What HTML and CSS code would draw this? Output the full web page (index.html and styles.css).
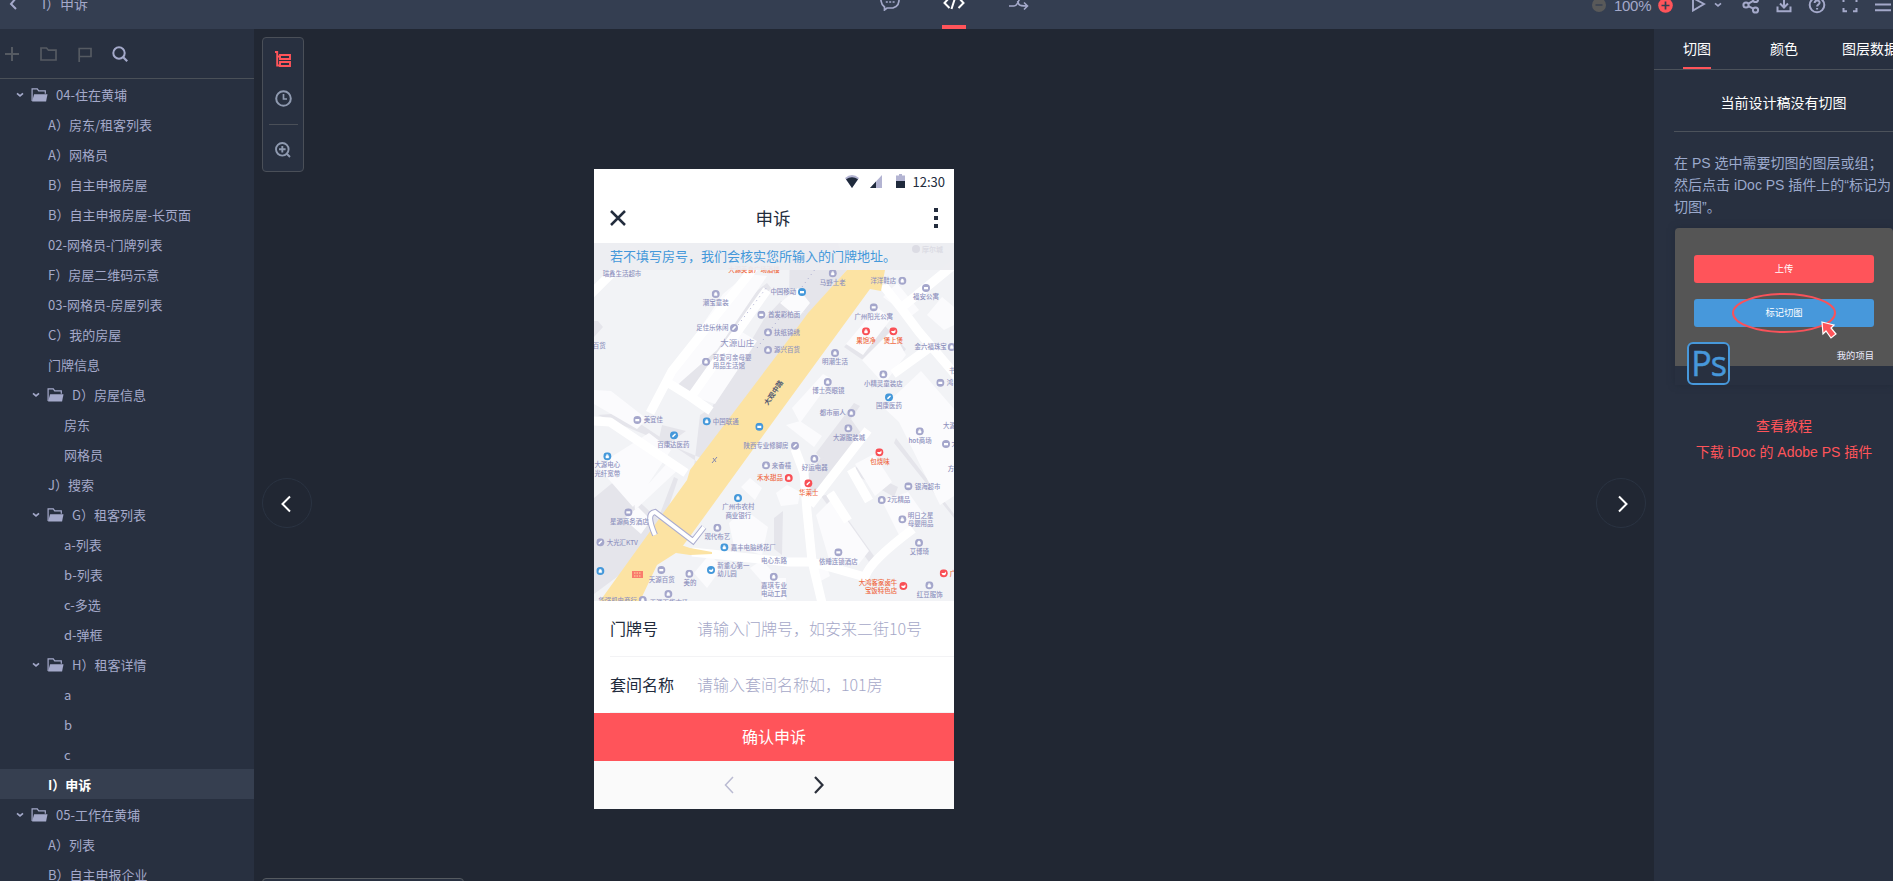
FILE: index.html
```html
<!DOCTYPE html>
<html lang="zh-CN">
<head>
<meta charset="utf-8">
<title>申诉</title>
<link rel="stylesheet" href="styles.css">
</head>
<body>
<svg class="defs" width="0" height="0">
  <symbol id="folder" viewBox="0 0 16 14"><path d="M.6 13V.8h5.2l1.4 2h6.600v3" fill="none" stroke="currentColor" stroke-width="1.2"/><path d="M2.600 6.200H16L14.600 13.400H.6z" fill="currentColor"/></symbol>
  <symbol id="caret" viewBox="0 0 8 6"><path d="M1 1.300l3 2.500 3-2.500" fill="none" stroke="currentColor" stroke-width="1.700"/></symbol>
  <symbol id="poi"><circle cx="4" cy="4" r="4"/><path d="M2.600 3.600h2.800v2H2.600zM3.200 3.500V2.400h1.600v1.100" fill="#fff" stroke="#fff" stroke-width=".5"/></symbol>
  <symbol id="bed"><circle cx="4" cy="4" r="4"/><path d="M2 3h4v2.300H2z" fill="#fff"/></symbol>
  <symbol id="pill"><circle cx="4" cy="4" r="4"/><path d="M2.900 5.100l2.200-2.200" stroke="#fff" stroke-width="1.500" stroke-linecap="round"/></symbol>
  <symbol id="food"><circle cx="4" cy="4" r="4"/><path d="M1.800 3.800h3L6 2.300l.3 1.600C6 6.800 2.200 6.800 1.800 3.800z" fill="#fff"/></symbol>
</svg>
<header class="topbar">
  <div class="crumb">
    <svg width="9" height="16" viewBox="0 0 9 16"><path d="M7 2L2 8l5 5" fill="none" stroke="currentColor" stroke-width="2"/></svg>
    <span>I）申诉</span>
  </div>
  <nav class="modes">
    <svg width="20" height="20" viewBox="0 0 20 20"><path d="M4.500 16C.5 13-.2 7 3 4s11-3.500 14 0 2.500 9-1 11.500L13 17H7l-2.500 2z" fill="none" stroke="currentColor" stroke-width="1.700"/><path d="M5.800 11h2M9.200 11h2M12.600 11h2" stroke="currentColor" stroke-width="1.500"/></svg>
    <span class="mode-on"><svg width="24" height="20" viewBox="0 0 24 20"><path d="M7.500 5.500L2.500 11l5 5M16.500 5.500l5 5.500-5 5M14 3l-4.500 14" fill="none" stroke="currentColor" stroke-width="2"/></svg></span>
    <svg width="22" height="20" viewBox="0 0 22 20"><path d="M1 15h5c5 0 4-9.500 9-9.500h4M9.500 10l1.500 3.500c1 1.500 3 1.500 8 1.500M16 11.500l3.500 3.500-3.500 3.500M1 5.500h4l3 2" fill="none" stroke="currentColor" stroke-width="1.600"/></svg>
  </nav>
  <div class="tools">
    <svg class="minus" width="14" height="14" viewBox="0 0 14 14"><circle cx="7" cy="7" r="7" fill="#595959"/><path d="M3.500 7h7" stroke="#343e51" stroke-width="1.400"/></svg>
    <span class="pct">100%</span>
    <svg class="plus" width="15" height="15" viewBox="0 0 15 15"><circle cx="7.500" cy="7.500" r="7.300" fill="#ff545a"/><path d="M3.500 7.500h8M7.500 3.500v8" stroke="#343e51" stroke-width="1.700"/></svg>
    <svg class="play" width="15" height="16" viewBox="0 0 15 16"><path d="M2 2l11 6-11 6.500z" fill="none" stroke="currentColor" stroke-width="1.900"/></svg>
    <svg class="tri" width="8" height="6"><use href="#caret"/></svg>
    <svg class="ic" width="18" height="18" viewBox="0 0 18 18"><circle cx="4" cy="9" r="2.600"/><circle cx="13.500" cy="3.500" r="2.600"/><circle cx="13.500" cy="14" r="2.600"/><path d="M6.400 10.200l4.800 2.500M6.400 7.700l4.800-2.800"/></svg>
    <svg class="ic" width="18" height="18" viewBox="0 0 18 18"><path d="M9 1v10M5 7.500l4 4 4-4M2.500 10.500v4.800h13v-4.800"/></svg>
    <svg class="ic" width="18" height="18" viewBox="0 0 18 18"><circle cx="9" cy="9" r="7.300"/><path d="M6.600 7c0-3.200 5-3.200 5-.3 0 1.800-2.500 1.800-2.500 3.800M9.100 12v1.600"/></svg>
    <svg class="ic" width="18" height="18" viewBox="0 0 18 18"><path d="M6 2.800H2.500V6M12 2.800h3.500V6M6 15.200H2.500V12M12 15.200h3.500V12"/></svg>
    <svg class="ic" width="18" height="18" viewBox="0 0 18 18"><path d="M1 3h16M1 8.500h16M1 14.200h16"/></svg>
  </div>
</header>
<div class="main">
  <aside class="side">
    <div class="side-tools">
      <svg width="14" height="14" viewBox="0 0 14 14"><path d="M0 7h14M7 0v14" stroke="#555a62" stroke-width="2"/></svg>
      <svg width="17" height="14" viewBox="0 0 17 14"><path d="M1 13V1h5.500l2 2.200H16V13z" fill="none" stroke="#555a62" stroke-width="1.700"/></svg>
      <svg width="14" height="15" viewBox="0 0 14 15"><path d="M1.200 15V1.500H13v8H2" fill="none" stroke="#555a62" stroke-width="1.700"/></svg>
      <svg width="16" height="16" viewBox="0 0 16 16"><circle cx="7" cy="7" r="5.700" fill="none" stroke="#a4a9ca" stroke-width="2"/><path d="M11 11l4.200 4.200" stroke="#a4a9ca" stroke-width="2.200"/></svg>
    </div>
    <ul class="tree">
      <li class="dir"><svg class="car"><use href="#caret"/></svg><svg class="fo"><use href="#folder"/></svg>04-住在黄埔</li>
      <li class="l1">A）房东/租客列表</li>
      <li class="l1">A）网格员</li>
      <li class="l1">B）自主申报房屋</li>
      <li class="l1">B）自主申报房屋-长页面</li>
      <li class="l1">02-网格员-门牌列表</li>
      <li class="l1">F）房屋二维码示意</li>
      <li class="l1">03-网格员-房屋列表</li>
      <li class="l1">C）我的房屋</li>
      <li class="l1">门牌信息</li>
      <li class="dir sub"><svg class="car"><use href="#caret"/></svg><svg class="fo"><use href="#folder"/></svg>D）房屋信息</li>
      <li class="l2">房东</li>
      <li class="l2">网格员</li>
      <li class="l1">J）搜索</li>
      <li class="dir sub"><svg class="car"><use href="#caret"/></svg><svg class="fo"><use href="#folder"/></svg>G）租客列表</li>
      <li class="l2">a-列表</li>
      <li class="l2">b-列表</li>
      <li class="l2">c-多选</li>
      <li class="l2">d-弹框</li>
      <li class="dir sub"><svg class="car"><use href="#caret"/></svg><svg class="fo"><use href="#folder"/></svg>H）租客详情</li>
      <li class="l2">a</li>
      <li class="l2">b</li>
      <li class="l2">c</li>
      <li class="l1 on">I）申诉</li>
      <li class="dir"><svg class="car"><use href="#caret"/></svg><svg class="fo"><use href="#folder"/></svg>05-工作在黄埔</li>
      <li class="l1">A）列表</li>
      <li class="l1">B）自主申报企业</li>
    </ul>
  </aside>
  <main class="canvas">
    <div class="toolbox">
      <svg width="16" height="17" viewBox="0 0 16 17"><path d="M0 1h2.200v13.500H5M2.200 5.500H5M5 4h10v4H5zM5 11h10v4H5z" fill="none" stroke="#ff545a" stroke-width="1.900"/></svg>
      <svg width="17" height="17" viewBox="0 0 17 17"><circle cx="8.500" cy="8.500" r="7.300" fill="none" stroke="#8f9ab0" stroke-width="2"/><path d="M8.500 4v5H12" fill="none" stroke="#8f9ab0" stroke-width="1.700"/></svg>
      <hr>
      <svg width="16" height="16" viewBox="0 0 16 16"><circle cx="7.300" cy="7.300" r="6.300" fill="none" stroke="#8f9ab0" stroke-width="1.900"/><path d="M4 7.300h6.600M7.300 4v6.600M11.500 11.500l3.500 3.500" stroke="#8f9ab0" stroke-width="1.900"/></svg>
    </div>
    <button class="round prev"><svg width="12" height="18" viewBox="0 0 12 18"><path d="M10 1.500L2.500 9l7.500 7.500" fill="none" stroke="#fff" stroke-width="2"/></svg></button>
    <button class="round next"><svg width="12" height="18" viewBox="0 0 12 18"><path d="M2 1.500L9.500 9 2 16.500" fill="none" stroke="#fff" stroke-width="2"/></svg></button>
    <div class="drawer"></div>
    <section class="phone">
      <div class="status">
        <svg width="14" height="13" viewBox="0 0 14 13"><path d="M0 3Q7-3 14 3L7 13z" fill="#b3b4d2"/><path d="M1 4.200Q7 .5 13 4.200L7 13z" fill="#1f2a3c"/></svg>
        <svg width="12" height="13" viewBox="0 0 12 13"><path d="M12 0v13H0z" fill="#b3b4d2"/><path d="M6 6.500V13H0z" fill="#1f2a3c"/></svg>
        <svg width="9" height="14" viewBox="0 0 9 14"><path d="M3 0h3v1.500h3V14H0V1.500h3z" fill="#b3b4d2"/><path d="M0 7h9v7H0z" fill="#1f2a3c"/></svg>
        <span>12:30</span>
      </div>
      <div class="titlebar">
        <svg width="18" height="18" viewBox="0 0 18 18"><path d="M2 2l14 14M16 2L2 16" stroke="#232c3d" stroke-width="2.500"/></svg>
        <b>申诉</b>
        <svg width="4" height="20" viewBox="0 0 4 20"><path d="M0 0h4v4H0zM0 8h4v4H0zM0 16h4v4H0z" fill="#232c3d"/></svg>
      </div>
      <div class="map">
        <svg width="360" height="358" viewBox="0 0 360 358">
          <path fill="#f2f3f6" d="M0 0h360v358H0z"/>
          <g fill="#e5e5eb">
            <path d="M164 47l9-7 4 5-57 80-20 29-18-9 36-50zM196 0h48l9 27-40 45-18-14zM170 76l17-18 27 14-70 100-26-8zM4 78l5 6-9 10V78z"/>
            <path d="M106 172l30-18 12 16-34 60-14-6zM4 172l26-2 90 60 4-8M68 182l24 6-30 22zM0 255l22-18 43 40-30 48-35 26zM209 238l48-62 14 20-51 60zM300 200l60 75v-4l-58-76zM262 224l42 20-4 10-38-22zM236 251l44 62-5 6-48-66z"/>
            <path d="M250 104l30-33 32 35-20 27zM180 275l9-7-1 44-8-6zM64 276l16-42 4 2-15 45zM222 210l38-50 6 3-38 54z"/>
          </g>
          <g fill="#fbfbfd">
            <path d="M129 51l24-20 20 2-50 74-42 37-6-12zM96 152l30-44 17-22 20 12-42 63zM186 60l18-15 12 15-12 15zM252 101l31-37 14 12-28 36zM268 117l30-30 14 25-22 29zM289 54l14-14 22 27-9 7zM333 72l15-18 12 10v18l-10 5z"/>
            <path d="M305 179l-16-15 38-36 33 38v87l-14 9zM261 221l19-10 18 28-17 14zM288 258l26-9 17 24-26 19zM222 272l16-16 37 52-11 14-27 1zM55 190l22 17-38 57-36-41zM40 257l36-40 10 8-45 42zM147 244l9-9 12 10-7 12zM135 280l15-14 24 18-6 28-28-9zM216 326l15-7 5 14-15 8zM168 335h24v22h-24z"/>
            <path d="M0 147l17 1 36 28-10 10-43-25zM182 250l11-8 13 7-2 12-17 2zM192 182l14-4 22 15-8 11zM198 165l31-34 9 5-32 44zM30 276l14-12 13 13-10 14zM100 330l15-18 14 11-16 22zM156 325l12-8 14 16-12 8z"/>
          </g>
          <g fill="none" stroke="#fff" stroke-width="9" stroke-linejoin="round">
            <path d="M-5 53L42 6M56 170l22-42L170 12M73 139l24 15 20 14M97 154l76-107M-2 178l18 1 76 51"/>
            <path d="M289 42l18 23 18 24 40 47M307 65l55-45M299 131l36-26M201 206l9 24 3 38 5 50 10 42M98 309l96 10h24l53 15q5-16 48-48M216 262l58-75M236 250l18 28M257 226l18 32"/>
          </g>
          <path fill="#fce3a3" d="M253 27h38l-4 21-11-2-92 126-87 120-12 16-22 14-17 36H6l87-121 3-10 90-119 28-38z"/>
          <path fill="#fce3a3" d="M84 301l12 4 22 4v2l-22 1-14-2z"/>
          <path d="M61 292c-6-14-7-22 0-23l38 29 11-14" fill="none" stroke="#abadd0" stroke-width="6"/>
          <path d="M61 292c-6-14-7-22 0-23l38 29 11-14" fill="none" stroke="#fff" stroke-width="4"/>
          <path d="M118 220l5-6M119 215l3 4" stroke="#8286ad"/>
          <path d="M144 82l29-38M163 105l30-40M208 44l14-19" stroke="#aaacd0" stroke-dasharray="1 4"/>
          <g fill="#a4a6cb">
            <use href="#poi" x="117.700" y="47"/><use href="#pill" x="136" y="81"/><use href="#poi" x="108" y="114.700"/><use href="#bed" x="39.300" y="173"/>
            <use href="#poi" x="234.700" y="26.300"/><use href="#poi" x="304.300" y="33.700"/><use href="#bed" x="328" y="41"/><use href="#bed" x="163.300" y="67.700"/><use href="#poi" x="170" y="85.300"/><use href="#poi" x="170" y="103"/><use href="#bed" x="275.700" y="60.300"/><use href="#poi" x="237" y="106"/><use href="#poi" x="353.700" y="100"/><use href="#poi" x="285.300" y="127.300"/><use href="#poi" x="229.700" y="135"/><use href="#poi" x="253.300" y="166"/><use href="#bed" x="342.300" y="135.700"/>
            <use href="#pill" x="197" y="198.700"/><use href="#poi" x="168" y="218.300"/><use href="#poi" x="119.300" y="280.700"/><use href="#bed" x="30.300" y="265.300"/><use href="#pill" x="2.300" y="295.300"/><use href="#bed" x="63.300" y="323"/><use href="#poi" x="91.300" y="326.700"/><use href="#poi" x="44.700" y="353"/><use href="#poi" x="70.300" y="347"/><use href="#poi" x="175.700" y="329.700"/>
            <use href="#poi" x="250.300" y="181.300"/><use href="#poi" x="321.700" y="184.300"/><use href="#bed" x="348" y="197"/><use href="#poi" x="216.300" y="211.700"/><use href="#bed" x="310.300" y="239.300"/><use href="#poi" x="283.700" y="253"/><use href="#poi" x="304.300" y="272.300"/><use href="#poi" x="321" y="295.700"/><use href="#bed" x="240.300" y="305.300"/><use href="#poi" x="331.300" y="338.300"/>
          </g>
          <g fill="#4498da">
            <use href="#bed" x="204" y="45"/><use href="#poi" x="108.700" y="174.300"/><use href="#pill" x="291" y="150.300"/><use href="#bed" x="161.300" y="179.700"/><use href="#pill" x="76" y="188.300"/><use href="#poi" x="9.300" y="209.300"/><use href="#poi" x="140" y="251"/><use href="#poi" x="126.300" y="300.300"/><use href="#food" x="113" y="323"/><use href="#poi" x="2.300" y="324"/>
          </g>
          <g fill="#f94f55">
            <use href="#poi" x="268" y="84.300"/><use href="#food" x="295.300" y="84.300"/><use href="#poi" x="190.700" y="231"/><use href="#food" x="281.300" y="205.300"/><use href="#pill" x="210.300" y="236.300"/><use href="#food" x="305.300" y="339"/><use href="#food" x="345.700" y="326.300"/>
            <path d="M38 328h11v7H38z" opacity=".7"/>
          </g>
          <path d="M40 330h7M40 333h7" stroke="#fce3a3" stroke-dasharray="1.500 1"/>
          <g class="lb mid">
            <text x="28" y="32.700">瑞鑫生活超市</text><text x="121.700" y="62.400">潮宝童装</text><text x="118.300" y="87.400">足佳乐休闲</text><text class="big" x="143.300" y="102.800">大源山庄</text><text x="5.300" y="105">百货</text><text x="131.700" y="181">中国联通</text><text x="59.300" y="179.400">美宜佳</text>
            <text x="238.700" y="41.700">马野土老</text><text x="289.300" y="40">洋洋鞋店</text><text x="332" y="56.400">福安公寓</text><text x="189.300" y="51.400">中国移动</text><text x="190" y="74">首发彩柏面</text><text x="193" y="91.700">扶纸锦绣</text><text x="193" y="109.400">源兴百货</text><text x="279.700" y="75.700">广州阳光公寓</text><text x="241" y="121.400">明潮生活</text><text x="336.700" y="106.400">金六福珠宝</text><text x="289.300" y="142.700">小精灵童装店</text><text x="234.300" y="150.400">博士亮眼镜</text><text x="295" y="165.400">国康医药</text><text x="238.700" y="172.400">都市丽人</text>
            <text x="79.300" y="203.700">百康达医药</text><text x="13.300" y="224.400">大源电心</text><text x="13.300" y="232.700">光纤宽带</text><text x="172" y="205">陕西专业修脚房</text><text x="187.500" y="224.700">来香禧</text><text x="144.300" y="266">广州市农村</text><text x="144.300" y="274.700">商业银行</text><text x="123.300" y="296.400">现代布艺</text><text x="35.300" y="280.700">星源商务酒店</text><text x="67.700" y="338.700">天源百货</text><text x="96" y="342">美的</text><text x="180" y="320">电心东路</text><text x="180" y="345">嘉琪专业</text><text x="180" y="353">电动工具</text><text x="75" y="362">天源百货市场</text>
            <text x="255" y="196.700">大源服装城</text><text x="326" y="200">hot商场</text><text x="220.700" y="227">好运电器</text><text x="325.300" y="311">艾博琦</text><text x="244.300" y="320.700">依睡连锁酒店</text><text x="335.700" y="353.700">红豆服饰</text>
          </g>
          <g class="lb">
            <text x="118.700" y="116.700">可爱可亲母婴</text><text x="118.700" y="124.700">用品生活馆</text><text x="12.700" y="301.700">大光汇KTV</text><text x="136.700" y="306.700">嘉丰电脑绣花厂</text><text x="123.300" y="325.400">新重心第一</text><text x="123.300" y="333.400">幼儿园</text><text x="4.300" y="359.500">华强机电商行</text>
            <text x="352.700" y="142">鸿</text><text x="355" y="130">书</text><text x="349" y="184.500">大源</text><text x="357.500" y="203">大</text><text x="353.700" y="227.700">方</text><text x="320.700" y="245.700">银海超市</text><text x="293.300" y="259.400">2元精品</text><text x="313.700" y="275">明日之星</text><text x="313.700" y="283">母婴用品</text>
          </g>
          <g class="lb hot mid">
            <text x="272" y="99.700">果饱净</text><text x="299.300" y="99.700">煲上煲</text><text x="176" y="237.400">禾水甜品</text><text x="286" y="221">包烧味</text><text x="214.700" y="252">华莱士</text><text x="284" y="342">大鸿客家卤牛</text><text x="287" y="350">宝饭特色店</text><text x="359" y="333">广</text>
            <text x="160" y="28.500">大源美食广场酒楼</text>
          </g>
          <text class="lb road" transform="translate(180 150) rotate(-56)" y="2">大观中路</text>
          <path fill="#ededf1" fill-opacity=".93" d="M0 0h360v27H0z"/>
          <g fill="#dcdce4"><circle cx="322" cy="6" r="4"/><text x="328" y="9" font-size="7" font-weight="bold">摩尔城</text></g>
        </svg>
        <p class="tip">若不填写房号，我们会核实您所输入的门牌地址。</p>
      </div>
      <div class="field"><label>门牌号</label><span>请输入门牌号，如安来二街10号</span></div>
      <div class="field"><label>套间名称</label><span>请输入套间名称如，101房</span></div>
      <div class="submit">确认申诉</div>
      <div class="pager">
        <svg width="10" height="18" viewBox="0 0 10 18"><path d="M9 1L1.500 9 9 17" fill="none" stroke="#babbd2" stroke-width="1.500"/></svg>
        <svg width="10" height="18" viewBox="0 0 10 18"><path d="M1 1l7.500 8L1 17" fill="none" stroke="#2b303b" stroke-width="2.200"/></svg>
      </div>
    </section>
  </main>
  <aside class="panel">
    <div class="tabs"><span class="cur">切图</span><span>颜色</span><span>图层数据</span></div>
    <div class="none">当前设计稿没有切图</div>
    <p class="help">在 PS 选中需要切图的图层或组；<br>然后点击 iDoc PS 插件上的“标记为<br>切图”。</p>
    <div class="demo">
      <div class="demo-body">
        <div class="db red">上传</div>
        <div class="db blue">标记切图</div>
        <div class="mine">我的项目</div>
      </div>
      <svg class="ring" width="110" height="50" viewBox="0 0 110 50"><ellipse cx="52" cy="21" rx="51" ry="19" fill="none" stroke="#f9525a" stroke-width="2"/><path d="M90 30l12 3-3 3 5 6-5 4-5-7-3 3z" fill="#ff545a" stroke="#fff" stroke-width="1.200"/></svg>
      <div class="ps">Ps</div>
    </div>
    <a class="link">查看教程</a>
    <a class="link">下载 iDoc 的 Adobe PS 插件</a>
  </aside>
</div>
</body>
</html>
```
FILE: styles.css
```css
* { box-sizing: border-box; }
body { margin: 0; width: 1893px; height: 881px; overflow: hidden; background: #212733; color: #a4a9ca; font-family: "Liberation Sans", "Noto Sans CJK SC", sans-serif; font-size: 14px; }
svg { display: block; flex: none; }
.defs { position: absolute; }
p { margin: 0; }

.topbar { height: 29px; background: #343e51; display: flex; overflow: hidden; }
.crumb { display: flex; width: 860px; padding-left: 9px; }
.crumb svg { margin-top: -4px; }
.crumb span { margin: -8px 0 0 24px; line-height: 22px; font-family: "Noto Sans CJK SC", sans-serif; font-size: 14px; }
.modes { display: flex; align-items: flex-start; gap: 42px; width: 200px; padding-left: 20px; }
.modes > svg { margin-top: -9px; }
.mode-on { display: block; height: 29px; color: #fff; border-bottom: 4px solid #ff545a; }
.mode-on svg { margin-top: -8px; }
.tools { display: flex; align-items: flex-start; width: 325px; margin-left: auto; padding-left: 24px; }
.minus { margin-top: -2px; }
.pct { margin: -4px 0 0 8px; width: 44px; line-height: 20px; font-size: 15px; letter-spacing: -.3px; }
.plus { margin-top: -2px; }
.play { margin: -4px 0 0 18px; }
.tri { margin: 2px 0 0 8px; }
.ic { margin: -4px 0 0 15px; fill: none; stroke: currentColor; stroke-width: 2; }
.tri + .ic { margin-left: 20px; }

.main { display: flex; height: 852px; }
.side { width: 254px; background: #283040; overflow: hidden; }
.side-tools { height: 50px; border-bottom: 1px solid #4a5058; display: flex; align-items: center; padding: 1px 0 0 5px; }
.side-tools svg:nth-child(2) { margin-left: 21px; }
.side-tools svg:nth-child(3) { margin-left: 21px; }
.side-tools svg:nth-child(4) { margin-left: 20px; }
.tree { list-style: none; margin: 0; padding: 0; font: 13px/30px "Noto Sans CJK SC", sans-serif; }
.tree li { height: 30px; padding-top: 1px; white-space: nowrap; }
.l1 { padding-left: 48px; }
.l2 { padding-left: 64px; }
.dir { display: flex; align-items: center; padding-left: 16px; }
.dir.sub { padding-left: 32px; }
.car { width: 8px; height: 6px; margin-right: 7px; }
.fo { width: 17px; height: 14px; margin-right: 8px; }
.tree .on { background: #363f50; color: #fff; font-weight: bold; }

.canvas { position: relative; width: 1400px; padding: 140px 0 0 340px; }
.toolbox { position: absolute; left: 8px; top: 8px; width: 42px; height: 135px; background: #283040; border: 1px solid #4a4f58; border-radius: 4px; display: flex; flex-direction: column; align-items: center; padding-top: 13px; }
.toolbox svg:nth-child(2) { margin-top: 22px; }
.toolbox hr { width: 29px; margin: 17px 0; border: 0; border-top: 1px solid #4a4f58; }
.round { position: absolute; top: 449px; width: 50px; height: 50px; border: 1px solid #2a3342; border-radius: 50%; background: none; display: flex; align-items: center; justify-content: center; padding: 2px 0 0; }
.prev { left: 8px; padding-right: 3px; }
.next { left: 1342px; padding-left: 3px; }
.drawer { position: absolute; left: 8px; top: 849px; width: 202px; height: 20px; background: #283040; border: 1px solid #555a60; border-radius: 4px; }

.phone { width: 360px; height: 640px; background: #fff; color: #232c3d; font-family: "Noto Sans CJK SC", sans-serif; overflow: hidden; }
.status { height: 24px; display: flex; justify-content: flex-end; align-items: center; padding-right: 9px; font-size: 13px; }
.status svg:nth-child(2) { margin-left: 11px; }
.status svg:nth-child(3) { margin: 0 8px 0 14px; }
.titlebar { height: 50px; display: flex; align-items: center; justify-content: space-between; padding: 0 16px 0 15px; }
.titlebar b { margin-right: 15px; font-size: 17.500px; font-weight: 400; line-height: 24px; padding-bottom: 1px; }
.map { position: relative; height: 358px; }
.tip { position: absolute; left: 16px; top: 2px; font-size: 13px; line-height: 22px; color: #4498da; white-space: nowrap; }
.lb { font-size: 6.450px; fill: #8f92be; font-weight: 500; }
.mid text { text-anchor: middle; }
.lb .big { font-size: 8.500px; font-weight: 400; }
.hot { fill: #ef6b45; }
.road { font-size: 7px; font-weight: bold; fill: #555b72; text-anchor: middle; }
.field { height: 56px; display: flex; align-items: center; margin-left: 16px; padding-bottom: 2px; border-bottom: 1px solid #f3f3f5; font-size: 16px; }
.field label { width: 87px; }
.field span { color: #a6a8c8; font-weight: 300; }
.submit { height: 48px; background: #ff545a; color: #fff; font-size: 16px; line-height: 46px; text-align: center; }
.pager { height: 48px; background: #fafafa; display: flex; align-items: center; gap: 80px; padding-left: 130px; }

.panel { width: 239px; background: #283040; overflow: hidden; }
.tabs { width: 260px; height: 41px; border-bottom: 1px solid #4c525b; display: flex; color: #fff; line-height: 40px; white-space: nowrap; }
.tabs span { height: 40px; margin-left: 59px; }
.tabs .cur { margin-left: 29px; border-bottom: 2px solid #ff545a; }
.tabs span:last-child { margin-left: 44px; }
.none { width: 240px; height: 62px; margin-left: 20px; padding-right: 21px; border-bottom: 1px solid #4c525b; line-height: 67px; text-align: center; color: #fff; }
.help { width: 240px; margin: 20px 0 0 20px; line-height: 22px; color: #9ba9cc; white-space: nowrap; }
.demo { position: relative; width: 218px; height: 157px; margin: 10px 0 0 21px; box-shadow: 0 0 6px #222b39; }
.demo-body { height: 138px; padding: 27px 19px 0; background: #555; border-radius: 4px 4px 0 0; }
.db { height: 28px; border-radius: 3px; color: #fff; font-size: 9.300px; line-height: 29px; text-align: center; }
.red { background: #ff545a; }
.blue { margin-top: 16px; background: #4798db; }
.mine { margin-top: 21px; text-align: right; color: #ececff; font-size: 9.300px; line-height: 16px; }
.ring { position: absolute; left: 57px; top: 64px; }
.ps { position: absolute; left: 12px; top: 114px; width: 43px; height: 43px; border: 2px solid #4798db; border-radius: 6px; background: #283040; color: #4798db; -webkit-text-stroke: .5px #4798db; font: 34px/39px "Open Sans", sans-serif; text-align: center; letter-spacing: -1px; }
.link { display: block; width: 260px; line-height: 26px; text-align: center; color: #ff545a; white-space: nowrap; }
.demo + .link { margin-top: 28px; }
```
